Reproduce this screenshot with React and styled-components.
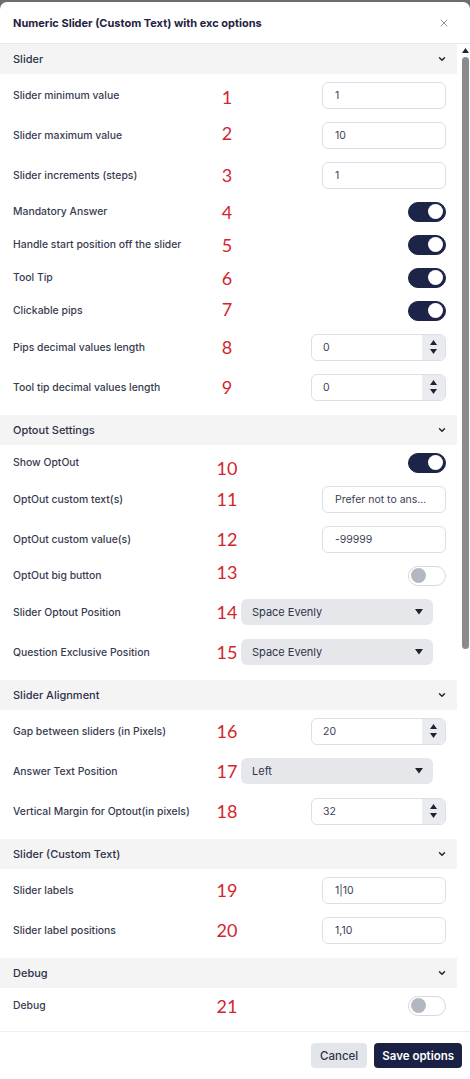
import React from 'react'
import styled, { createGlobalStyle } from 'styled-components'
import { ChevronDown, X } from 'lucide-react'

const GlobalStyle = createGlobalStyle`
  html, body {
    margin: 0;
    padding: 0;
  }
  body {
    background: #6d6d6d;
    font-family: Inter, "Noto Sans", sans-serif;
  }
`

const Modal = styled.div`
  margin-top: 2px;
  height: 1077px;
  background: #fff;
  border-radius: 7px 7px 0 0;
  display: flex;
  flex-direction: column;
  overflow: hidden;
`

const Header = styled.div`
  flex: none;
  height: 41px;
  display: flex;
  align-items: center;
  justify-content: space-between;
  padding: 0 20px 0 13px;
  border-bottom: 1px solid #e7e8ec;
`

const Title = styled.h1`
  margin: 0;
  font-size: 11px;
  font-weight: 700;
  color: #1f2340;
`

const Close = styled.span`
  display: flex;
  color: #8f939c;
`

const Main = styled.div`
  flex: none;
  height: 987px;
  display: flex;
  border-bottom: 1px solid #eceef1;
`

const Body = styled.div`
  flex: 1;
  overflow: hidden;
`

const Rail = styled.div`
  flex: none;
  width: 13px;
  display: flex;
  flex-direction: column;
  align-items: center;
  padding-top: 4px;
  padding-left: 3px;
  box-sizing: border-box;
`

const Thumb = styled.div`
  margin-top: 4px;
  width: 7px;
  height: 592px;
  border-radius: 4px;
  background: #8b8b8b;
`

const SectionHead = styled.div`
  height: 30px;
  display: flex;
  align-items: center;
  justify-content: space-between;
  padding: 0 10px 0 13px;
  background: #f4f4f5;
  font-size: 11px;
  font-weight: 500;
  color: #2d3148;
`

const SectionBody = styled.div`
  padding: 1px 0 8px;
`

const Row = styled.div`
  height: ${p => (p.compact ? 33 : 40)}px;
  display: grid;
  grid-template-columns: 200px 28px 1fr;
  align-items: center;
  padding: 0 11px 0 13px;
`

const Label = styled.span`
  font-size: 10.4px;
  font-weight: 500;
  color: #383c50;
  white-space: nowrap;
`

const Mark = styled.span`
  justify-self: center;
  font-family: Lato, "Open Sans", sans-serif;
  font-size: 18px;
  color: #d3262c;
  transform: translateY(${p => p.dy || 0}px);
`

const Field = styled.div`
  justify-self: end;
  width: 124px;
  height: 27px;
  box-sizing: border-box;
  border: 1px solid #dcdfe5;
  border-radius: 6px;
  display: flex;
  align-items: center;
  padding-left: 12px;
  font-size: 10.5px;
  color: #3b3f55;
`

const Spin = styled.div`
  justify-self: end;
  width: 135px;
  height: 27px;
  box-sizing: border-box;
  border: 1px solid #dcdfe5;
  border-radius: 6px;
  display: flex;
  overflow: hidden;
  font-size: 10.5px;
  color: #3b3f55;
`

const SpinValue = styled.span`
  flex: 1;
  display: flex;
  align-items: center;
  padding-left: 11px;
`

const SpinArrows = styled.span`
  width: 23px;
  background: #e9ebef;
  display: flex;
  flex-direction: column;
  align-items: center;
  justify-content: center;
  gap: 4px;
`

const Select = styled.div`
  justify-self: start;
  width: 192px;
  height: 26px;
  box-sizing: border-box;
  border-radius: 6px;
  background: #e5e7eb;
  display: flex;
  align-items: center;
  justify-content: space-between;
  padding: 0 10px 0 11px;
  font-size: 11px;
  color: #2f3349;
`

const Toggle = styled.span`
  justify-self: end;
  width: 38px;
  height: 20px;
  box-sizing: border-box;
  border-radius: 10px;
  display: flex;
  align-items: center;
  justify-content: ${p => (p.on ? 'flex-end' : 'flex-start')};
  padding: 0 2px;
  background: ${p => (p.on ? '#1c2447' : '#fff')};
  border: 1px solid ${p => (p.on ? '#1c2447' : '#d6d9de')};

  &::after {
    content: '';
    width: 15px;
    height: 15px;
    border-radius: 50%;
    background: ${p => (p.on ? '#fff' : '#b3b8c0')};
  }
`

const Footer = styled.div`
  flex: 1;
  display: flex;
  align-items: center;
  justify-content: flex-end;
  gap: 7px;
  padding: 0 8px 0 0;
`

const Button = styled.button`
  height: 25px;
  border: none;
  border-radius: 4px;
  padding: 0 ${p => (p.primary ? 8 : 9)}px;
  font-family: Inter, "Noto Sans", sans-serif;
  font-size: 11.5px;
  font-weight: ${p => (p.primary ? 600 : 500)};
  background: ${p => (p.primary ? '#1a2145' : '#e2e6ea')};
  color: ${p => (p.primary ? '#fff' : '#2f3349')};
`

const Tri = ({ up, size = 7 }) => (
  <svg width={size} height={size * 0.7} viewBox="0 0 10 7">
    <path d={up ? 'M5 0 L10 7 L0 7 Z' : 'M0 0 L10 0 L5 7 Z'} fill="#1f2230" />
  </svg>
)

const Section = ({ title, children }) => (
  <>
    <SectionHead>
      {title}
      <ChevronDown size={10} strokeWidth={3.4} color="#1f2230" />
    </SectionHead>
    <SectionBody>{children}</SectionBody>
  </>
)

const Line = ({ label, n, dy, kind, value, on }) => (
  <Row compact={kind === 'toggle'}>
    <Label>{label}</Label>
    <Mark dy={dy}>{n}</Mark>
    {kind === 'field' && <Field>{value}</Field>}
    {kind === 'toggle' && <Toggle on={on} />}
    {kind === 'spin' && (
      <Spin>
        <SpinValue>{value}</SpinValue>
        <SpinArrows>
          <Tri up />
          <Tri />
        </SpinArrows>
      </Spin>
    )}
    {kind === 'select' && (
      <Select>
        {value}
        <Tri size={8} />
      </Select>
    )}
  </Row>
)

const App = () => {
  return (
    <Modal>
      <GlobalStyle />
      <Header>
        <Title>Numeric Slider (Custom Text) with exc options</Title>
        <Close><X size={12} strokeWidth={2} /></Close>
      </Header>
      <Main>
        <Body>
          <Section title="Slider">
            <Line label="Slider minimum value" n="1" dy={2} kind="field" value="1" />
            <Line label="Slider maximum value" n="2" dy={-2} kind="field" value="10" />
            <Line label="Slider increments (steps)" n="3" kind="field" value="1" />
            <Line label="Mandatory Answer" n="4" kind="toggle" on />
            <Line label="Handle start position off the slider" n="5" kind="toggle" on />
            <Line label="Tool Tip" n="6" kind="toggle" on />
            <Line label="Clickable pips" n="7" dy={-2} kind="toggle" on />
            <Line label="Pips decimal values length" n="8" kind="spin" value="0" />
            <Line label="Tool tip decimal values length" n="9" kind="spin" value="0" />
          </Section>
          <Section title="Optout Settings">
            <Line label="Show OptOut" n="10" dy={5} kind="toggle" on />
            <Line label="OptOut custom text(s)" n="11" kind="field" value="Prefer not to ans..." />
            <Line label="OptOut custom value(s)" n="12" kind="field" value="-99999" />
            <Line label="OptOut big button" n="13" dy={-4} kind="toggle" />
            <Line label="Slider Optout Position" n="14" kind="select" value="Space Evenly" />
            <Line label="Question Exclusive Position" n="15" kind="select" value="Space Evenly" />
          </Section>
          <Section title="Slider Alignment">
            <Line label="Gap between sliders (in Pixels)" n="16" kind="spin" value="20" />
            <Line label="Answer Text Position" n="17" kind="select" value="Left" />
            <Line label="Vertical Margin for Optout(in pixels)" n="18" kind="spin" value="32" />
          </Section>
          <Section title="Slider (Custom Text)">
            <Line label="Slider labels" n="19" kind="field" value="1|10" />
            <Line label="Slider label positions" n="20" kind="field" value="1,10" />
          </Section>
          <Section title="Debug">
            <Line label="Debug" n="21" kind="toggle" />
          </Section>
        </Body>
        <Rail>
          <Tri up size={7} />
          <Thumb />
        </Rail>
      </Main>
      <Footer>
        <Button>Cancel</Button>
        <Button primary>Save options</Button>
      </Footer>
    </Modal>
  )
}

export default App
